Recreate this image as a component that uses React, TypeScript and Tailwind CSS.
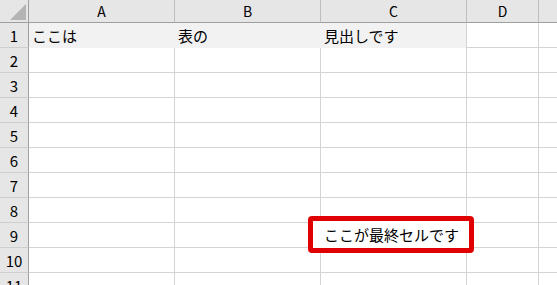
import React from "react";

const cols = ["A", "B", "C", "D", ""];
const row1: Record<number, string> = { 0: "ここは", 1: "表の", 2: "見出しです" };

export default function App() {
  const rows = Array.from({ length: 12 }, (_, i) => i + 1);
  return (
    <div
      className="relative w-[557px] h-[285px] overflow-hidden bg-white text-black"
      style={{ fontFamily: '"Noto Sans CJK JP", "Noto Sans", sans-serif' }}
    >
      <div className="grid grid-cols-[29px_146px_146px_146px_72px_1fr] grid-rows-[23px_repeat(12,25px)]">
        {/* corner */}
        <div className="relative bg-[#e6e6e6] border-r border-b border-[#9f9f9f]">
          <svg className="absolute right-[2px] bottom-[2px]" width="16" height="16" viewBox="0 0 16 16">
            <polygon points="16,0 16,16 0,16" fill="#b4b4b4" />
          </svg>
        </div>
        {cols.map((c, i) => (
          <div
            key={"h" + i}
            className={`bg-[#e6e6e6] border-b border-[#9f9f9f] flex items-center justify-center text-[14px] leading-none ${
              i < 4 ? "border-r border-r-[#bdbdbd]" : ""
            }`}
          >
            {c}
          </div>
        ))}
        {rows.map((r) => (
          <React.Fragment key={r}>
            <div className="bg-[#e6e6e6] border-r border-r-[#9f9f9f] border-b border-b-[#cfcfcf] flex items-center justify-center text-[15px] leading-none">
              {r}
            </div>
            {cols.map((_, ci) => (
              <div
                key={ci}
                className={`flex items-center pl-[3px] text-[15px] leading-none whitespace-nowrap ${
                  r === 1 && ci < 3 ? "bg-[#f2f2f2]" : "border-b border-[#d4d4d4]"
                } ${ci < 4 ? "border-r border-r-[#d4d4d4]" : ""} ${r === 1 && ci < 2 ? "border-r-[#f2f2f2]" : ""}`}
              >
                {r === 1 ? row1[ci] ?? "" : ""}
              </div>
            ))}
          </React.Fragment>
        ))}
      </div>
      <div className="absolute left-[308px] top-[216px] w-[166px] h-[37px] border-[5px] border-[#e00000] rounded-[4px] bg-white flex items-center pl-[11px] text-[15px] leading-none whitespace-nowrap">
        ここが最終セルです
      </div>
    </div>
  );
}
